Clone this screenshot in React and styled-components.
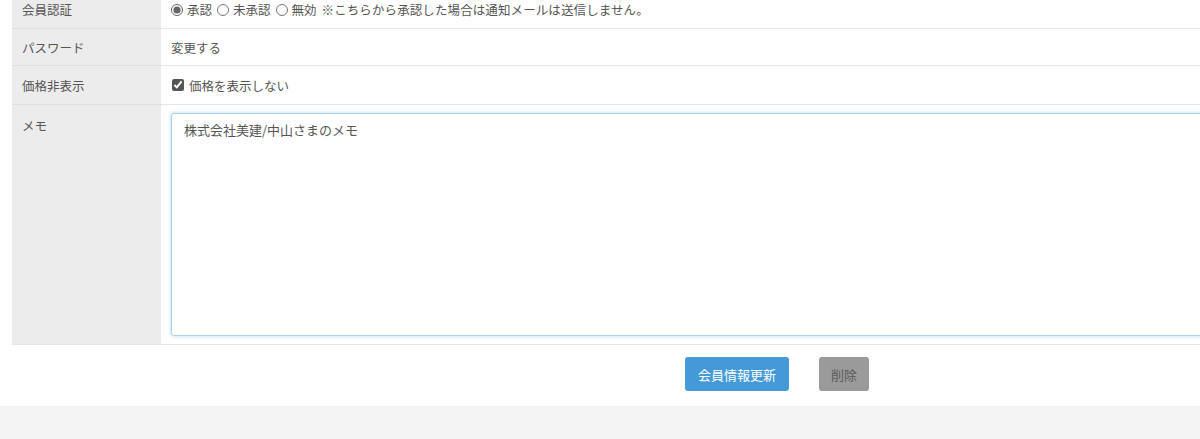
import React from 'react';
import styled, { createGlobalStyle } from 'styled-components';

const GlobalStyle = createGlobalStyle`
  *, *::before, *::after {
    box-sizing: border-box;
  }
  html, body {
    margin: 0;
    padding: 0;
    background: #ffffff;
    overflow: hidden;
  }
  body {
    font-family: "Noto Sans CJK JP", "Noto Sans", sans-serif;
    color: #555;
    font-size: 12.5px;
  }
`;

const Page = styled.div`
  width: 1200px;
  height: 439px;
  display: flex;
  flex-direction: column;
  overflow: hidden;
`;

const Main = styled.div`
  background: #fff;
  padding: 0 0 15px 12px;
`;

const Table = styled.div`
  width: 1240px;
  margin-top: -9px;
  display: grid;
  grid-template-columns: 149px 1fr;
  border-bottom: 1px solid #e4e4e4;
`;

const Label = styled.div`
  background: #ececec;
  padding: ${p => (p.$top ? '11px 10px' : '0 10px')};
  display: flex;
  align-items: ${p => (p.$top ? 'flex-start' : 'center')};
  height: ${p => (p.$h ? `${p.$h}px` : 'auto')};
  border-bottom: ${p => (p.$last ? 'none' : '1px solid #dedede')};
  font-size: 12.5px;
  color: #555;
`;

const Value = styled.div`
  padding: ${p => (p.$area ? '8px 0 8px 10px' : '0 10px')};
  display: flex;
  align-items: center;
  gap: 4px;
  height: ${p => (p.$h ? `${p.$h}px` : 'auto')};
  border-bottom: ${p => (p.$last ? 'none' : '1px solid #e6e6e6')};
  font-size: 12.5px;
  color: #555;
`;

const Radio = styled.input.attrs({ type: 'radio' })`
  margin: 0 0 0 ${p => (p.$first ? '0' : '1px')};
  width: 12px;
  height: 12px;
  accent-color: #666;
`;

const Check = styled.input.attrs({ type: 'checkbox' })`
  margin: 0 1px 0 1px;
  width: 12px;
  height: 12px;
  accent-color: #555;
`;

const Note = styled.span`
  margin-left: 1px;
  letter-spacing: 0.1px;
`;

const Memo = styled.textarea`
  width: 100%;
  height: 223px;
  border: 1px solid #a9d0ec;
  border-radius: 3px;
  box-shadow: 0 0 4px rgba(102, 175, 233, 0.45);
  padding: 6px 12px;
  font-family: "Noto Sans CJK JP", "Noto Sans", sans-serif;
  font-size: 13px;
  color: #555;
  resize: none;
  outline: none;
`;

const Actions = styled.div`
  display: flex;
  justify-content: center;
  gap: 30px;
  padding-top: 12px;
  margin-left: 342px;
`;

const Button = styled.button`
  height: 34px;
  padding: 0 ${p => (p.$danger ? '12px' : '13px')};
  border: none;
  border-radius: 3px;
  background: ${p => (p.$danger ? '#9a9a9a' : '#4499d9')};
  color: ${p => (p.$danger ? '#5a5a5a' : '#fff')};
  font-family: "Noto Sans CJK JP", "Noto Sans", sans-serif;
  font-size: 13px;
  cursor: pointer;
`;

const Footer = styled.div`
  flex: 1;
  background: #f4f4f4;
`;

export default function App() {
  return (
    <Page>
      <GlobalStyle />
      <Main>
        <Table>
          <Label $h={38}>会員認証</Label>
          <Value $h={38}>
            <Radio name="auth" $first defaultChecked />承認
            <Radio name="auth" />未承認
            <Radio name="auth" />無効
            <Note>※こちらから承認した場合は通知メールは送信しません。</Note>
          </Value>
          <Label $h={37}>パスワード</Label>
          <Value $h={37}>変更する</Value>
          <Label $h={39}>価格非表示</Label>
          <Value $h={39}>
            <Check defaultChecked />価格を表示しない
          </Value>
          <Label $top $last>メモ</Label>
          <Value $area $last>
            <Memo defaultValue="株式会社美建/中山さまのメモ" />
          </Value>
        </Table>
        <Actions>
          <Button>会員情報更新</Button>
          <Button $danger>削除</Button>
        </Actions>
      </Main>
      <Footer />
    </Page>
  );
}
